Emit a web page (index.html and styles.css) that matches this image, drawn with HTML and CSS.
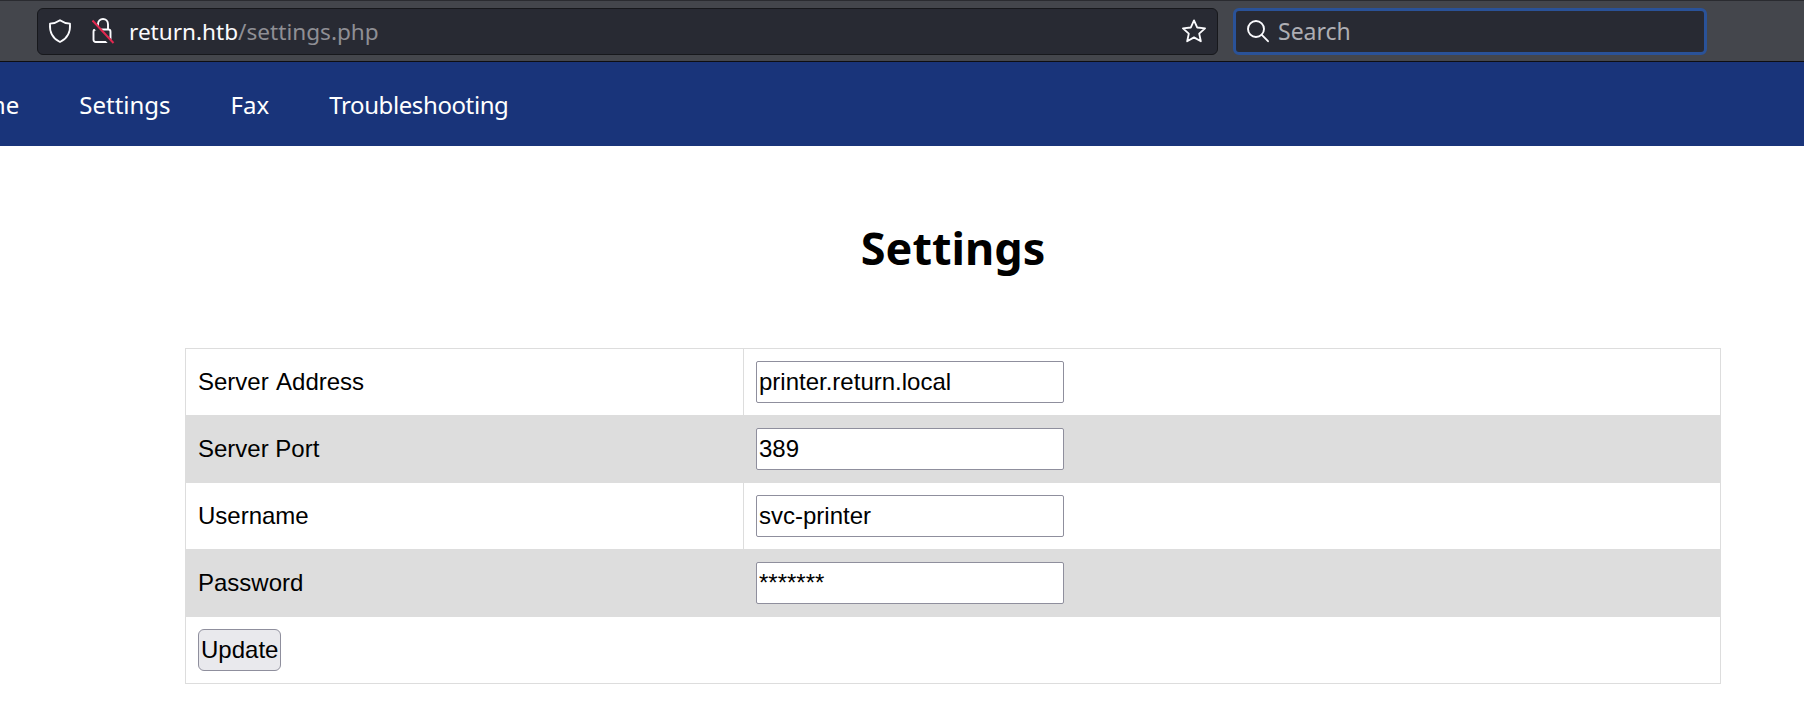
FILE: index.html
```html
<!DOCTYPE html>
<html lang="en">
<head>
<meta charset="utf-8">
<title>Settings</title>
<link rel="stylesheet" href="styles.css">
</head>
<body>
<header class="toolbar">
  <div class="urlbar">
    <svg class="icon shield" width="24" height="24" viewBox="0 0 24 24" fill="none" stroke="#fbfbfe" stroke-width="1.8" stroke-linejoin="round"><path d="M12 1.2 C15 3.4 18.5 4.4 22 4.6 C22.6 13 19.5 19.5 12 23 C4.5 19.5 1.4 13 2 4.6 C5.5 4.4 9 3.4 12 1.2 Z"/></svg>
    <svg class="icon lock" width="24" height="26" viewBox="0 0 24 26" fill="none"><path d="M6 11.5 V6.2 C6 3 8.2 1 11 1 C13.8 1 16 3 16 6.2 V11.5" stroke="#fbfbfe" stroke-width="1.9"/><rect x="1.5" y="11.5" width="17" height="12.5" rx="2.2" stroke="#fbfbfe" stroke-width="1.9"/><path d="M0 4.5 L20 26" stroke="#282a33" stroke-width="5"/><path d="M0.5 2.5 L21.5 25" stroke="#e22850" stroke-width="2"/></svg>
    <div class="url"><span class="host">return.htb</span><span class="path">/settings.php</span></div>
    <svg class="icon star" width="26" height="26" viewBox="0 0 24 24" fill="none" stroke="#fbfbfe" stroke-width="1.7" stroke-linejoin="round"><path d="M12 2.2 L15 8.8 L22.2 9.6 L16.8 14.4 L18.3 21.5 L12 17.9 L5.7 21.5 L7.2 14.4 L1.8 9.6 L9 8.8 Z"/></svg>
  </div>
  <div class="searchbar">
    <svg class="icon" width="24" height="24" viewBox="0 0 24 24" fill="none" stroke="#fbfbfe" stroke-width="1.9" stroke-linecap="round"><circle cx="10" cy="10" r="8"/><path d="M15.8 15.8 L22 22.2"/></svg>
    <span class="search-label">Search</span>
  </div>
</header>
<nav class="nav">
  <a class="nav-link" href="#">Home</a>
  <a class="nav-link" href="#">Settings</a>
  <a class="nav-link" href="#">Fax</a>
  <a class="nav-link nav-link-tight" href="#">Troubleshooting</a>
</nav>
<main class="content">
  <h1 class="title">Settings</h1>
  <table class="form-table">
    <tr><td class="label label-spaced">Server Address</td><td><input class="field" type="text" value="printer.return.local"></td></tr>
    <tr class="alt"><td class="label">Server Port</td><td><input class="field" type="text" value="389"></td></tr>
    <tr><td class="label">Username</td><td><input class="field" type="text" value="svc-printer"></td></tr>
    <tr class="alt"><td class="label">Password</td><td><input class="field" type="text" value="*******"></td></tr>
    <tr><td colspan="2"><button class="update" type="button">Update</button></td></tr>
  </table>
</main>
</body>
</html>
```
FILE: styles.css
```css
* { box-sizing: border-box; }
html, body { margin: 0; padding: 0; height: 705px; overflow: hidden; background: #fff; }
body { font-family: "Liberation Sans", Arial, sans-serif; color: #000; }

.toolbar {
  height: 62px;
  display: flex;
  align-items: center;
  padding: 0 98px 0 37px;
  gap: 15px;
  background: #44464c;
  border-top: 1px solid #2a2b30;
  border-bottom: 1px solid #0e0e12;
}
.urlbar {
  flex: 0 0 1181px;
  height: 47px;
  display: flex;
  align-items: center;
  background-color: #282a33;
  border: 1px solid #17181c;
  border-radius: 6px;
  padding: 0 10px 0 10px;
  font-family: "Noto Sans", sans-serif;
  font-size: 22.6px;
}
.icon { flex: none; display: block; }
.lock { margin-left: 20px; }
.url { margin-left: 13px; flex: 1; white-space: nowrap; }
.host { color: #fbfbfe; }
.path { color: #8f8f95; }
.searchbar {
  flex: 0 0 474px;
  height: 47px;
  display: flex;
  align-items: center;
  gap: 8px;
  padding: 0 10px;
  background: #282a33;
  border: 3px solid #2a5298;
  border-radius: 6px;
  font-family: "Noto Sans", sans-serif;
  font-size: 23px;
  color: #aeaeb3;
}

.nav {
  height: 84px;
  display: flex;
  align-items: center;
  background: #19347a;
  overflow: hidden;
}
.nav-link {
  color: #fff;
  text-decoration: none;
  font-family: "Noto Sans", sans-serif;
  font-size: 24px;
  padding: 0 30px;
}
.nav-link:first-child { margin-left: -79px; }
.nav-link-tight { letter-spacing: -0.4px; }

.content { padding: 0 83px 0 185px; }
.title {
  margin: 0;
  padding-top: 70px;
  height: 202px;
  text-align: center;
  font-family: "Noto Sans", sans-serif;
  font-size: 45px;
  font-weight: 700;
  line-height: 63px;
}
.form-table {
  width: 1536px;
  border-collapse: collapse;
  table-layout: fixed;
  font-size: 24px;
  border: 1px solid #ddd;
}
.form-table td {
  padding: 12px;
  border: 1px solid #ddd;
  height: 67px;
}
.form-table td:first-child { width: 558px; }
.label-spaced { word-spacing: 2px; }
.alt { background: #ddd; }
.field {
  display: block;
  width: 308px;
  height: 42px;
  padding: 1px 2px;
  font: 24px "Liberation Sans", Arial, sans-serif;
  color: #000;
  background: #fff;
  border: 1px solid #8f8f9d;
  border-radius: 2px;
}
.update {
  display: block;
  height: 42px;
  padding: 0 2px;
  font: 24px "Liberation Sans", Arial, sans-serif;
  color: #000;
  background: #e9e9ed;
  border: 1px solid #8f8f9d;
  border-radius: 6px;
}
```
